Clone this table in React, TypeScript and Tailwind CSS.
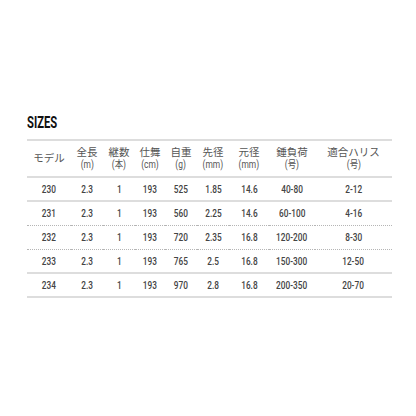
import React from 'react';

type Col = { label: string; unit?: string; width: string };

const cols: Col[] = [
  { label: 'モデル', width: 'w-[44px]' },
  { label: '全長', unit: '(m)', width: 'w-[32px]' },
  { label: '継数', unit: '(本)', width: 'w-[32px]' },
  { label: '仕舞', unit: '(cm)', width: 'w-[30px]' },
  { label: '自重', unit: '(g)', width: 'w-[32px]' },
  { label: '先径', unit: '(mm)', width: 'w-[32px]' },
  { label: '元径', unit: '(mm)', width: 'w-[40px]' },
  { label: '錘負荷', unit: '(号)', width: 'w-[46px]' },
  { label: '適合ハリス', unit: '(号)', width: 'w-[77px]' },
];

const rows: { cells: string[]; border: 'solid' | 'dotted' }[] = [
  { cells: ['230', '2.3', '1', '193', '525', '1.85', '14.6', '40-80', '2-12'], border: 'solid' },
  { cells: ['231', '2.3', '1', '193', '560', '2.25', '14.6', '60-100', '4-16'], border: 'dotted' },
  { cells: ['232', '2.3', '1', '193', '720', '2.35', '16.8', '120-200', '8-30'], border: 'dotted' },
  { cells: ['233', '2.3', '1', '193', '765', '2.5', '16.8', '150-300', '12-50'], border: 'solid' },
  { cells: ['234', '2.3', '1', '193', '970', '2.8', '16.8', '200-350', '20-70'], border: 'solid' },
];

const font = "font-['Roboto','Noto_Sans_CJK_JP',sans-serif]";

export default function App() {
  return (
    <div className={`w-[416px] h-[416px] bg-white pt-[113px] px-[27px] ${font}`}>
      <h2 className="text-[16px] font-bold leading-[20px] text-[#111] mb-[6px]">
        <span className="inline-block origin-left scale-x-[0.7]">SIZES</span>
      </h2>
      <table className="w-[365px] table-fixed border-collapse text-[#444]">
        <thead>
          <tr className="border-t-2 border-b-2 border-[#dddddd] h-[37px]">
            {cols.map((c) => (
              <th key={c.label} className={`${c.width} p-0 font-normal text-[10.5px] leading-[12px] text-center align-middle text-[#555]`}>
                <div className="whitespace-nowrap">{c.label}</div>
                {c.unit && (
                  <div className="whitespace-nowrap">
                    <span className="inline-block scale-x-[0.8]">{c.unit}</span>
                  </div>
                )}
              </th>
            ))}
          </tr>
        </thead>
        <tbody>
          {rows.map((r) => (
            <tr
              key={r.cells[0]}
              className={
                r.border === 'solid'
                  ? 'h-[24px] border-b-2 border-[#dddddd]'
                  : 'h-[24px] border-b border-dotted border-[#b5b5b5]'
              }
            >
              {r.cells.map((v, i) => (
                <td key={i} className="p-0 text-center align-middle text-[11.5px] font-medium leading-[14px] whitespace-nowrap">
                  <span className="inline-block scale-x-[0.72]">{v}</span>
                </td>
              ))}
            </tr>
          ))}
        </tbody>
      </table>
    </div>
  );
}
